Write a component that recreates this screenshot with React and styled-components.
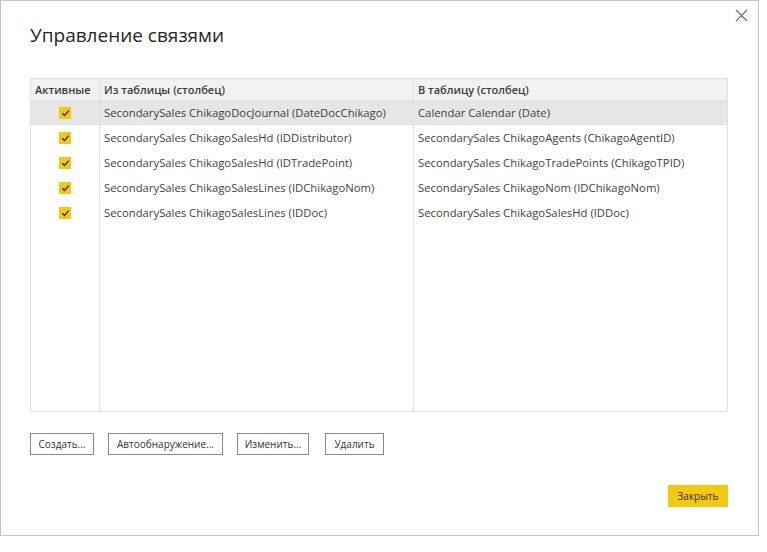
import React from "react";
import styled, { createGlobalStyle } from "styled-components";

const Global = createGlobalStyle`
  html, body { margin: 0; padding: 0; background: #ffffff; }
  body { font-family: "Open Sans", "Noto Sans", sans-serif; color: #333; }
`;

const Dialog = styled.div`
  position: relative;
  box-sizing: border-box;
  width: 759px;
  height: 536px;
  border: 1px solid #c6c6c6;
  background: #fff;
  padding: 20px 30px 0 29px;
  display: flex;
  flex-direction: column;
`;

const CloseX = styled.button`
  position: absolute;
  top: 6px;
  right: 9px;
  width: 16px;
  height: 16px;
  padding: 0;
  border: 0;
  background: transparent;
  display: flex;
  align-items: center;
  justify-content: center;
`;

const Title = styled.h1`
  margin: 0;
  font-size: 19px;
  font-weight: 400;
  color: #252525;
  line-height: 28px;
`;

const Table = styled.div`
  margin-top: 29px;
  height: 334px;
  box-sizing: border-box;
  border: 1px solid #e1e1e1;
  display: flex;
  flex-direction: column;
  font-size: 11.3px;
`;

const Row = styled.div`
  display: grid;
  grid-template-columns: 69px 314px 1fr;
  height: ${(p) => (p.$header ? "21px" : "25px")};
  background: ${(p) => (p.$header ? "#f2f2f2" : p.$selected ? "#e6e6e6" : "transparent")};
  flex: ${(p) => (p.$fill ? "1" : "none")};
  ${(p) => (p.$fill ? "height: auto;" : "")}
`;

const Cell = styled.div`
  display: flex;
  align-items: center;
  justify-content: ${(p) => (p.$center ? "center" : "flex-start")};
  padding: ${(p) => (p.$center ? "0" : "0 4px")};
  border-right: ${(p) => (p.$last ? "none" : "1px solid #e1e1e1")};
  font-weight: ${(p) => (p.$header ? 600 : 400)};
  font-size: ${(p) => (p.$header ? "11px" : "inherit")};
  color: ${(p) => (p.$header ? "#3a3a3a" : "#3f3f3f")};
  white-space: nowrap;
  overflow: hidden;
`;

const Check = styled.span`
  width: 12px;
  height: 12px;
  background: #f2c811;
  display: flex;
  align-items: center;
  justify-content: center;
`;

const ButtonRow = styled.div`
  display: flex;
  gap: 14px;
  margin-top: 21px;
`;

const Button = styled.button`
  box-sizing: border-box;
  width: ${(p) => p.$w}px;
  height: 22px;
  padding: 0;
  margin-right: ${(p) => p.$mr || 0}px;
  border: 1px solid #8a8a8a;
  background: #fff;
  font-family: "Open Sans", "Noto Sans", sans-serif;
  font-size: 10px;
  color: #333;
  cursor: pointer;
`;

const Footer = styled.div`
  display: flex;
  justify-content: flex-end;
  margin-top: 30px;
`;

const Primary = styled.button`
  box-sizing: border-box;
  width: 60px;
  height: 22px;
  border: 0;
  background: #f2c811;
  font-family: "Open Sans", "Noto Sans", sans-serif;
  font-size: 10px;
  color: #333;
`;

const rows = [
  ["SecondarySales ChikagoDocJournal (DateDocChikago)", "Calendar Calendar (Date)"],
  ["SecondarySales ChikagoSalesHd (IDDistributor)", "SecondarySales ChikagoAgents (ChikagoAgentID)"],
  ["SecondarySales ChikagoSalesHd (IDTradePoint)", "SecondarySales ChikagoTradePoints (ChikagoTPID)"],
  ["SecondarySales ChikagoSalesLines (IDChikagoNom)", "SecondarySales ChikagoNom (IDChikagoNom)"],
  ["SecondarySales ChikagoSalesLines (IDDoc)", "SecondarySales ChikagoSalesHd (IDDoc)"],
];

const CheckMark = () => (
  <svg width="9" height="8" viewBox="0 0 9 8">
    <path d="M1.2 4.2 L3.5 6.4 L7.8 1.6" fill="none" stroke="#3a2f00" strokeWidth="1.4" />
  </svg>
);

export default function App() {
  return (
    <>
      <Global />
      <Dialog>
        <CloseX aria-label="close">
          <svg width="13" height="13" viewBox="0 0 13 13">
            <path d="M1 1 L12 12 M12 1 L1 12" stroke="#6b6b6b" strokeWidth="1.1" />
          </svg>
        </CloseX>
        <Title>Управление связями</Title>
        <Table>
          <Row $header>
            <Cell $header>Активные</Cell>
            <Cell $header>Из таблицы (столбец)</Cell>
            <Cell $header $last>В таблицу (столбец)</Cell>
          </Row>
          {rows.map((r, i) => (
            <Row key={i} $selected={i === 0}>
              <Cell $center>
                <Check>
                  <CheckMark />
                </Check>
              </Cell>
              <Cell>{r[0]}</Cell>
              <Cell $last>{r[1]}</Cell>
            </Row>
          ))}
          <Row $fill>
            <Cell />
            <Cell />
            <Cell $last />
          </Row>
        </Table>
        <ButtonRow>
          <Button $w={64}>Создать...</Button>
          <Button $w={115}>Автообнаружение...</Button>
          <Button $w={72} $mr={2}>Изменить...</Button>
          <Button $w={59}>Удалить</Button>
        </ButtonRow>
        <Footer>
          <Primary>Закрыть</Primary>
        </Footer>
      </Dialog>
    </>
  );
}
